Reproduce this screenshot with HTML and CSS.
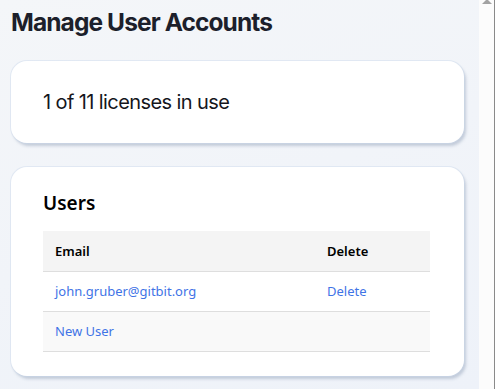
FILE: index.html
```html
<!DOCTYPE html>
<html lang="en">
<head>
    <meta charset="UTF-8">
    <meta name="viewport" content="width=device-width, initial-scale=1.0">
    <title>Manage User Accounts</title>
    <link rel="stylesheet" href="styles.css">
</head>
<body>
  <div class="window">
    <main class="page">
      <h1>Manage User Accounts</h1>

      <section class="card license">
        <p class="license-text">1 of 11 licenses in use</p>
      </section>

      <section class="card users">
        <h2>Users</h2>
        <table class="user-table">
          <thead>
            <tr>
              <th class="col-email">Email</th>
              <th>Delete</th>
            </tr>
          </thead>
          <tbody>
            <tr>
              <td><a href="#">john.gruber@gitbit.org</a></td>
              <td><a href="#">Delete</a></td>
            </tr>
            <tr class="new-row">
              <td><a href="#">New User</a></td>
              <td></td>
            </tr>
          </tbody>
        </table>
      </section>
    </main>
    <div class="scrollbar">
      <span class="arrow-up"></span>
    </div>
  </div>
</body>
</html>
```

FILE: styles.css
```css
*{
    margin: 0;
    padding: 0;
    box-sizing: border-box;
}
body{
    font-family: "Noto Sans", sans-serif;
    overflow: hidden;
}
.window{
    display: flex;
    height: 100vh;
}
.page{
    flex: 1;
    padding: 7px 15px 0 11px;
    background: linear-gradient(160deg, #f4f6f9 0%, #eef2f9 100%);
}
h1{
    font-family: Inter, sans-serif;
    font-size: 24.5px;
    font-weight: 700;
    letter-spacing: -0.9px;
    line-height: 31px;
    color: #1c1f2b;
    margin-bottom: 23px;
}
.card{
    background-color: #fff;
    border-radius: 16px;
    box-shadow: 0 0 0 1px rgba(205, 218, 236, 0.45), 2px 3px 3px rgba(140, 155, 180, 0.45);
}
.license{
    height: 82px;
    padding: 0 32px;
    display: flex;
    align-items: center;
    margin-bottom: 24px;
}
.license-text{
    font-family: Inter, sans-serif;
    font-size: 20px;
    letter-spacing: -0.6px;
    color: #15161c;
}
.users{
    padding: 24px 32px 24px 32px;
}
h2{
    font-size: 19px;
    font-weight: 600;
    line-height: 24px;
    color: #000;
    margin-bottom: 16px;
}
.user-table{
    width: 387px;
    border-collapse: collapse;
    font-size: 13px;
}
.user-table th, .user-table td{
    height: 40px;
    padding: 0 12px;
    text-align: left;
    border-bottom: 1px solid #dedede;
}
.user-table th{
    background-color: #f4f4f4;
    font-weight: 600;
    color: #000;
}
.col-email{
    width: 272px;
}
.new-row td{
    background-color: #f9f9f9;
}
.user-table a{
    color: #3f74e6;
    text-decoration: none;
}
.scrollbar{
    width: 16px;
    background-color: #fcfcfc;
    border-right: 1px solid #8a8a8a;
    position: relative;
}
.arrow-up{
    position: absolute;
    top: -1px;
    left: 3px;
    width: 0;
    height: 0;
    border-left: 5px solid transparent;
    border-right: 5px solid transparent;
    border-bottom: 5px solid #a3a3a3;
}
```
